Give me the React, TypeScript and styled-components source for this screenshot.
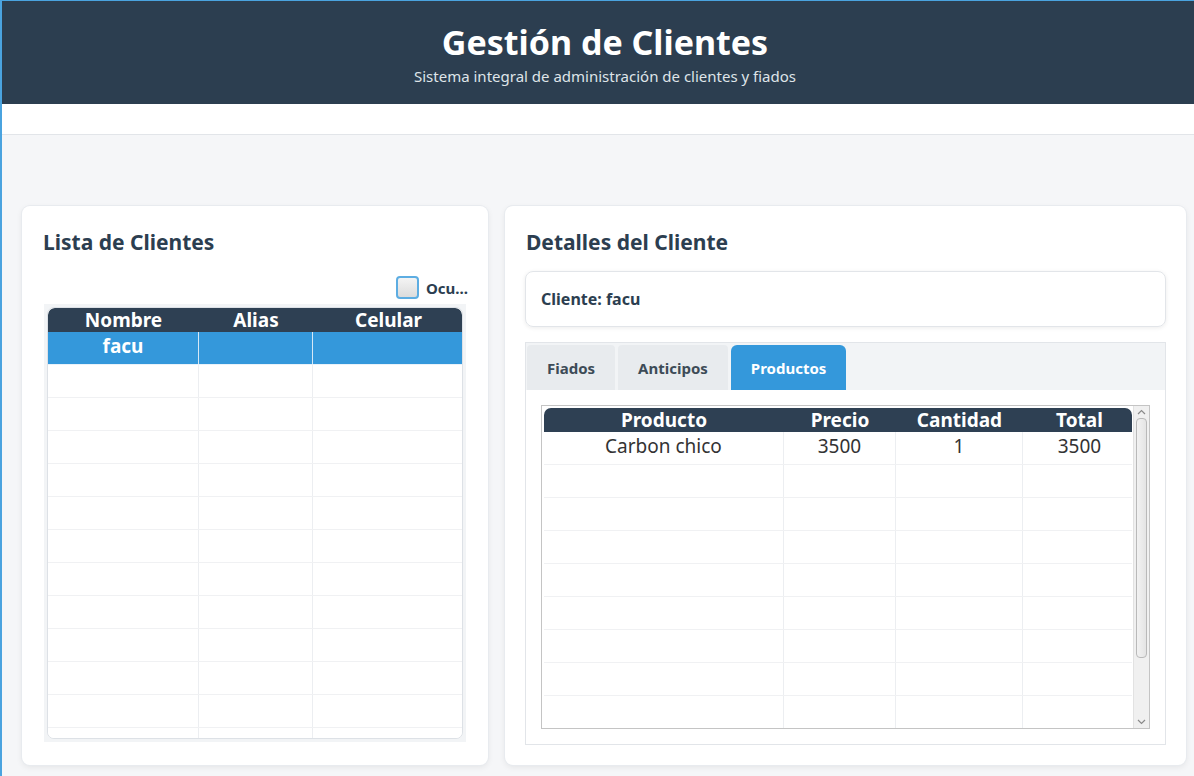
import styled, { createGlobalStyle } from "styled-components";

const GlobalStyle = createGlobalStyle`
  html, body {
    margin: 0;
    padding: 0;
    background: #f5f6f8;
  }
  * {
    box-sizing: border-box;
  }
  body {
    font-family: "Noto Sans", "Open Sans", sans-serif;
  }
`;

const clientes = [{ nombre: "facu", alias: "", celular: "" }];
const productos = [{ producto: "Carbon chico", precio: "3500", cantidad: "1", total: "3500" }];

const App = () => {
  return (
    <Window>
      <GlobalStyle />
      <Header>
        <HeaderTitle>Gestión de Clientes</HeaderTitle>
        <HeaderSub>Sistema integral de administración de clientes y fiados</HeaderSub>
      </Header>
      <Strip />
      <Main>
        <Card>
          <CardTitle>Lista de Clientes</CardTitle>
          <CheckRow>
            <CheckBox />
            <CheckLabel>Ocu...</CheckLabel>
          </CheckRow>
          <TableFrame>
            <Table $cols="151px 114px 151px" $rounded>
              <HeadRow>
                <HeadCell>Nombre</HeadCell>
                <HeadCell>Alias</HeadCell>
                <HeadCell>Celular</HeadCell>
              </HeadRow>
              <Body>
                {clientes.map((c) => (
                  <Row key={c.nombre} $selected>
                    <Cell $bold $light>{c.nombre}</Cell>
                    <Cell $light>{c.alias}</Cell>
                    <Cell $light>{c.celular}</Cell>
                  </Row>
                ))}
                {Array.from({ length: 12 }).map((_, i) => (
                  <Row key={i}>
                    <Cell />
                    <Cell />
                    <Cell />
                  </Row>
                ))}
              </Body>
            </Table>
          </TableFrame>
        </Card>

        <Card>
          <CardTitle>Detalles del Cliente</CardTitle>
          <ClientBox>Cliente: facu</ClientBox>
          <TabPane>
            <TabHeader>
              <Tab>Fiados</Tab>
              <Tab>Anticipos</Tab>
              <Tab $active>Productos</Tab>
            </TabHeader>
            <TabContent>
              <GridFrame>
                <Table $cols="240px 112px 127px 113px">
                  <HeadRow>
                    <HeadCell>Producto</HeadCell>
                    <HeadCell>Precio</HeadCell>
                    <HeadCell>Cantidad</HeadCell>
                    <HeadCell>Total</HeadCell>
                  </HeadRow>
                  <Body>
                    {productos.map((p) => (
                      <Row key={p.producto}>
                        <Cell>{p.producto}</Cell>
                        <Cell>{p.precio}</Cell>
                        <Cell>{p.cantidad}</Cell>
                        <Cell>{p.total}</Cell>
                      </Row>
                    ))}
                    {Array.from({ length: 9 }).map((_, i) => (
                      <Row key={i}>
                        <Cell />
                        <Cell />
                        <Cell />
                        <Cell />
                      </Row>
                    ))}
                  </Body>
                </Table>
                <ScrollBar>
                  <Arrow>
                    <svg width="9" height="6" viewBox="0 0 9 6">
                      <path d="M1 5 L4.5 1.5 L8 5" fill="none" stroke="#8a8a8a" strokeWidth="1.2" />
                    </svg>
                  </Arrow>
                  <Track>
                    <Thumb />
                  </Track>
                  <Arrow>
                    <svg width="9" height="6" viewBox="0 0 9 6">
                      <path d="M1 1 L4.5 4.5 L8 1" fill="none" stroke="#8a8a8a" strokeWidth="1.2" />
                    </svg>
                  </Arrow>
                </ScrollBar>
              </GridFrame>
            </TabContent>
          </TabPane>
        </Card>
      </Main>
    </Window>
  );
};
export default App;

const Window = styled.div`
  width: 1194px;
  height: 776px;
  overflow: hidden;
  border-left: 2px solid #4aa3df;
  border-top: 1px solid #4aa3df;
  background: #f5f6f8;
  display: flex;
  flex-direction: column;
`;

const Header = styled.div`
  height: 103px;
  flex-shrink: 0;
  background: #2c3e50;
  display: flex;
  flex-direction: column;
  align-items: center;
  padding: 19px 0 0 14px;
`;

const HeaderTitle = styled.div`
  font-size: 34px;
  font-weight: 700;
  color: #ffffff;
  line-height: 44px;
`;

const HeaderSub = styled.div`
  font-size: 15px;
  color: #dfe4e8;
  line-height: 20px;
  margin-top: 2px;
`;

const Strip = styled.div`
  height: 31px;
  flex-shrink: 0;
  background: #ffffff;
  border-bottom: 1px solid #e2e5e9;
`;

const Main = styled.div`
  flex: 1;
  display: grid;
  grid-template-columns: 466px 681px;
  column-gap: 17px;
  padding: 71px 0 0 20px;
  align-items: start;
`;

const Card = styled.div`
  height: 559px;
  background: #ffffff;
  border-radius: 8px;
  box-shadow: 0 0 0 1px #e8ebef, 0 2px 6px rgba(0, 0, 0, 0.08);
  padding: 20px;
  display: flex;
  flex-direction: column;
`;

const CardTitle = styled.div`
  flex-shrink: 0;
  font-size: 21px;
  font-weight: 700;
  color: #2c3e50;
  line-height: 30px;
  margin-top: 1px;
  margin-bottom: 14px;
  padding-left: 1px;
`;

const CheckRow = styled.div`
  flex-shrink: 0;
  display: flex;
  justify-content: flex-end;
  align-items: center;
  gap: 7px;
  height: 23px;
  margin-top: 5px;
  margin-bottom: 5px;
`;

const CheckBox = styled.div`
  width: 23px;
  height: 23px;
  border-radius: 4px;
  border: 2px solid #5dade2;
  background: linear-gradient(#f4f4f4, #dcdcdc);
`;

const CheckLabel = styled.span`
  font-size: 15px;
  font-weight: 700;
  color: #2c3e50;
`;

const TableFrame = styled.div`
  flex-shrink: 0;
  height: 438px;
  width: 422px;
  background: #f2f4f6;
  padding: 3px;
  margin-left: 2px;
  display: flex;
`;

const Table = styled.div<{ $cols: string; $rounded?: boolean }>`
  --cols: ${(p) => p.$cols};
  background: #ffffff;
  border: ${(p) => (p.$rounded ? "1px solid #dde1e6" : "none")};
  border-radius: ${(p) => (p.$rounded ? "7px" : "0")};
  overflow: hidden;
  display: flex;
  flex-direction: column;
  flex: 1;
`;

const HeadRow = styled.div`
  display: grid;
  grid-template-columns: var(--cols);
  height: 24px;
  background: #2e4053;
  border-radius: 7px 7px 0 0;
  flex-shrink: 0;
`;

const HeadCell = styled.div`
  color: #ffffff;
  font-weight: 700;
  font-size: 19px;
  line-height: 24px;
  text-align: center;
  white-space: nowrap;
`;

const Body = styled.div`
  flex: 1;
  overflow: hidden;
`;

const Row = styled.div<{ $selected?: boolean }>`
  display: grid;
  grid-template-columns: var(--cols);
  height: 33px;
  background: ${(p) => (p.$selected ? "#3498db" : "#ffffff")};
  border-bottom: 1px solid ${(p) => (p.$selected ? "#e9f2fa" : "#f0f1f3")};
`;

const Cell = styled.div<{ $bold?: boolean; $light?: boolean }>`
  font-size: 19px;
  line-height: 28px;
  text-align: center;
  color: ${(p) => (p.$light ? "#ffffff" : "#333333")};
  font-weight: ${(p) => (p.$bold ? 700 : 400)};
  border-right: 1px solid ${(p) => (p.$light ? "#d6e8f6" : "#eceef1")};
  &:last-child {
    border-right: none;
  }
`;

const ClientBox = styled.div`
  flex-shrink: 0;
  height: 56px;
  border: 1px solid #e2e5e9;
  border-radius: 8px;
  box-shadow: 0 1px 4px rgba(0, 0, 0, 0.08);
  padding: 0 15px;
  display: flex;
  align-items: center;
  font-size: 16px;
  font-weight: 700;
  color: #2c3e50;
  margin-bottom: 15px;
`;

const TabPane = styled.div`
  flex: 1;
  min-height: 0;
  border: 1px solid #e2e5e9;
  display: flex;
  flex-direction: column;
`;

const TabHeader = styled.div`
  height: 47px;
  flex-shrink: 0;
  background: #f2f4f6;
  display: flex;
  align-items: flex-end;
  gap: 3px;
  padding-left: 1px;
`;

const Tab = styled.div<{ $active?: boolean }>`
  height: 45px;
  padding: 0 20px;
  display: flex;
  align-items: center;
  font-size: 15px;
  font-weight: 700;
  color: ${(p) => (p.$active ? "#ffffff" : "#3d4b57")};
  background: ${(p) => (p.$active ? "#3498db" : "#e8ebee")};
  border-radius: ${(p) => (p.$active ? "6px 6px 0 0" : "4px 4px 0 0")};
`;

const TabContent = styled.div`
  flex: 1;
  min-height: 0;
  background: #ffffff;
  padding: 15px;
  display: flex;
`;

const GridFrame = styled.div`
  flex: 1;
  border: 1px solid #c4c4c4;
  padding: 2px 0 0 2px;
  display: flex;
  overflow: hidden;
`;

const ScrollBar = styled.div`
  width: 16px;
  margin-left: 1px;
  margin-top: -2px;
  background: #f0f0f0;
  border-left: 1px solid #e2e2e2;
  display: flex;
  flex-direction: column;
  align-items: center;
`;

const Arrow = styled.div`
  height: 12px;
  flex-shrink: 0;
  display: flex;
  align-items: center;
  justify-content: center;
`;

const Track = styled.div`
  flex: 1;
  width: 100%;
  padding: 0 2px;
`;

const Thumb = styled.div`
  height: 240px;
  border: 1px solid #b9b9b9;
  border-radius: 4px;
  background: linear-gradient(90deg, #f2f2f2, #e4e4e4);
`;
